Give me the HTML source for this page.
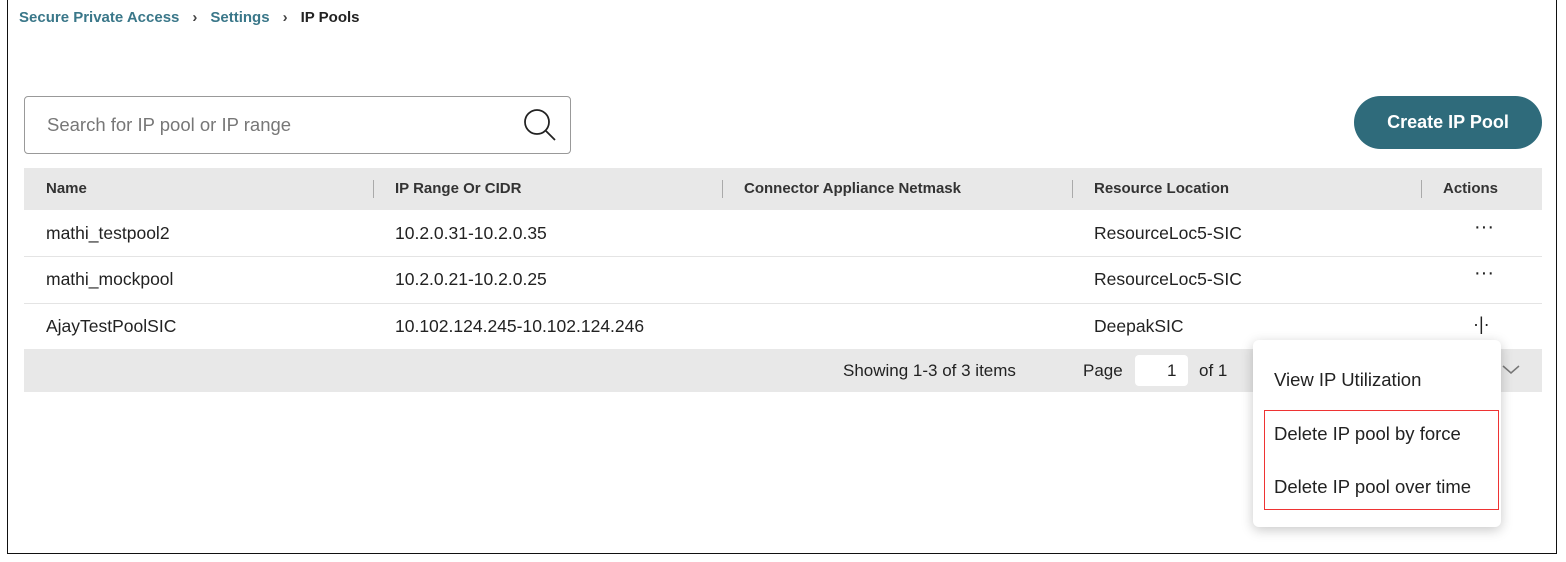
<html><head><style>
body{margin:0;width:1566px;height:562px;background:#fff;font-family:"Liberation Sans",sans-serif;position:relative;overflow:hidden;color:#222}
.a{position:absolute}
.frame{left:7px;top:-2px;width:1548px;height:555px;border:1.5px solid #111;border-top:none}
.t{font-size:17.5px;white-space:nowrap}
.h{font-size:15px;font-weight:bold;color:#333;top:180px}
</style></head><body>
<div class="a frame"></div>
<div class="a" style="left:19px;top:9px;font-size:15px;font-weight:bold;white-space:nowrap"><span style="color:#3a7789">Secure Private Access</span><span style="color:#444;margin:0 13px">›</span><span style="color:#3a7789">Settings</span><span style="color:#444;margin:0 13px">›</span><span style="color:#222">IP Pools</span></div>
<div class="a" style="left:24px;top:96px;width:545px;height:56px;border:1px solid #999;border-radius:4px"></div>
<div class="a t" style="left:47px;top:114px;color:#777;font-size:18.5px">Search for IP pool or IP range</div>
<svg class="a" style="left:521px;top:106px" width="36" height="36"><circle cx="16" cy="16" r="12" fill="none" stroke="#222" stroke-width="1.8"/><line x1="25" y1="25" x2="34" y2="34" stroke="#222" stroke-width="1.8"/></svg>
<div class="a" style="left:1354px;top:96px;width:188px;height:53px;background:#2f6b7b;border-radius:27px;color:#fff;font-size:18px;font-weight:bold;text-align:center;line-height:53px">Create IP Pool</div>
<div class="a" style="left:24px;top:168px;width:1518px;height:42px;background:#e8e8e8"></div>
<div class="a t h" style="left:46px">Name</div>
<div class="a t h" style="left:395px">IP Range Or CIDR</div>
<div class="a t h" style="left:744px">Connector Appliance Netmask</div>
<div class="a t h" style="left:1094px">Resource Location</div>
<div class="a t h" style="left:1443px">Actions</div>
<div class="a" style="left:373px;top:180px;width:1px;height:18px;background:#aaa"></div>
<div class="a" style="left:722px;top:180px;width:1px;height:18px;background:#aaa"></div>
<div class="a" style="left:1072px;top:180px;width:1px;height:18px;background:#aaa"></div>
<div class="a" style="left:1421px;top:180px;width:1px;height:18px;background:#aaa"></div>
<div class="a" style="left:24px;top:256px;width:1518px;height:1px;background:#e4e4e4"></div>
<div class="a" style="left:24px;top:303px;width:1518px;height:1px;background:#e4e4e4"></div>
<div class="a t" style="left:46px;top:223px">mathi_testpool2</div>
<div class="a t" style="left:395px;top:223px">10.2.0.31-10.2.0.35</div>
<div class="a t" style="left:1094px;top:223px">ResourceLoc5-SIC</div>
<div class="a t" style="left:1474px;top:216px;font-size:20px">···</div>
<div class="a t" style="left:46px;top:269px">mathi_mockpool</div>
<div class="a t" style="left:395px;top:269px">10.2.0.21-10.2.0.25</div>
<div class="a t" style="left:1094px;top:269px">ResourceLoc5-SIC</div>
<div class="a t" style="left:1474px;top:262px;font-size:20px">···</div>
<div class="a t" style="left:46px;top:316px">AjayTestPoolSIC</div>
<div class="a t" style="left:395px;top:316px">10.102.124.245-10.102.124.246</div>
<div class="a t" style="left:1094px;top:316px">DeepakSIC</div>
<div class="a t" style="left:1473px;top:314px;font-size:18px">·|·</div>
<div class="a" style="left:24px;top:349px;width:1518px;height:43px;background:#e8e8e8"></div>
<div class="a t" style="left:843px;top:361px;font-size:17px">Showing 1-3 of 3 items</div>
<div class="a t" style="left:1083px;top:361px;font-size:17px">Page</div>
<div class="a" style="left:1135px;top:355px;width:53px;height:31px;background:#fff;border-radius:4px"></div>
<div class="a t" style="left:1167px;top:361px;font-size:17px">1</div>
<div class="a t" style="left:1199px;top:361px;font-size:17px">of 1</div>
<svg class="a" style="left:1502px;top:364px" width="18" height="12"><polyline points="1,2 9,9 17,2" fill="none" stroke="#777" stroke-width="1.5"/></svg>
<div class="a" style="left:1253px;top:340px;width:248px;height:187px;background:#fff;border-radius:6px;box-shadow:0 3px 12px rgba(0,0,0,.22)"></div>
<div class="a t" style="left:1274px;top:369px;font-size:18.5px">View IP Utilization</div>
<div class="a" style="left:1264px;top:410px;width:233px;height:98px;border:1px solid #e33"></div>
<div class="a t" style="left:1274px;top:423px;font-size:18.5px">Delete IP pool by force</div>
<div class="a t" style="left:1274px;top:476px;font-size:18.5px">Delete IP pool over time</div>
</body></html>
